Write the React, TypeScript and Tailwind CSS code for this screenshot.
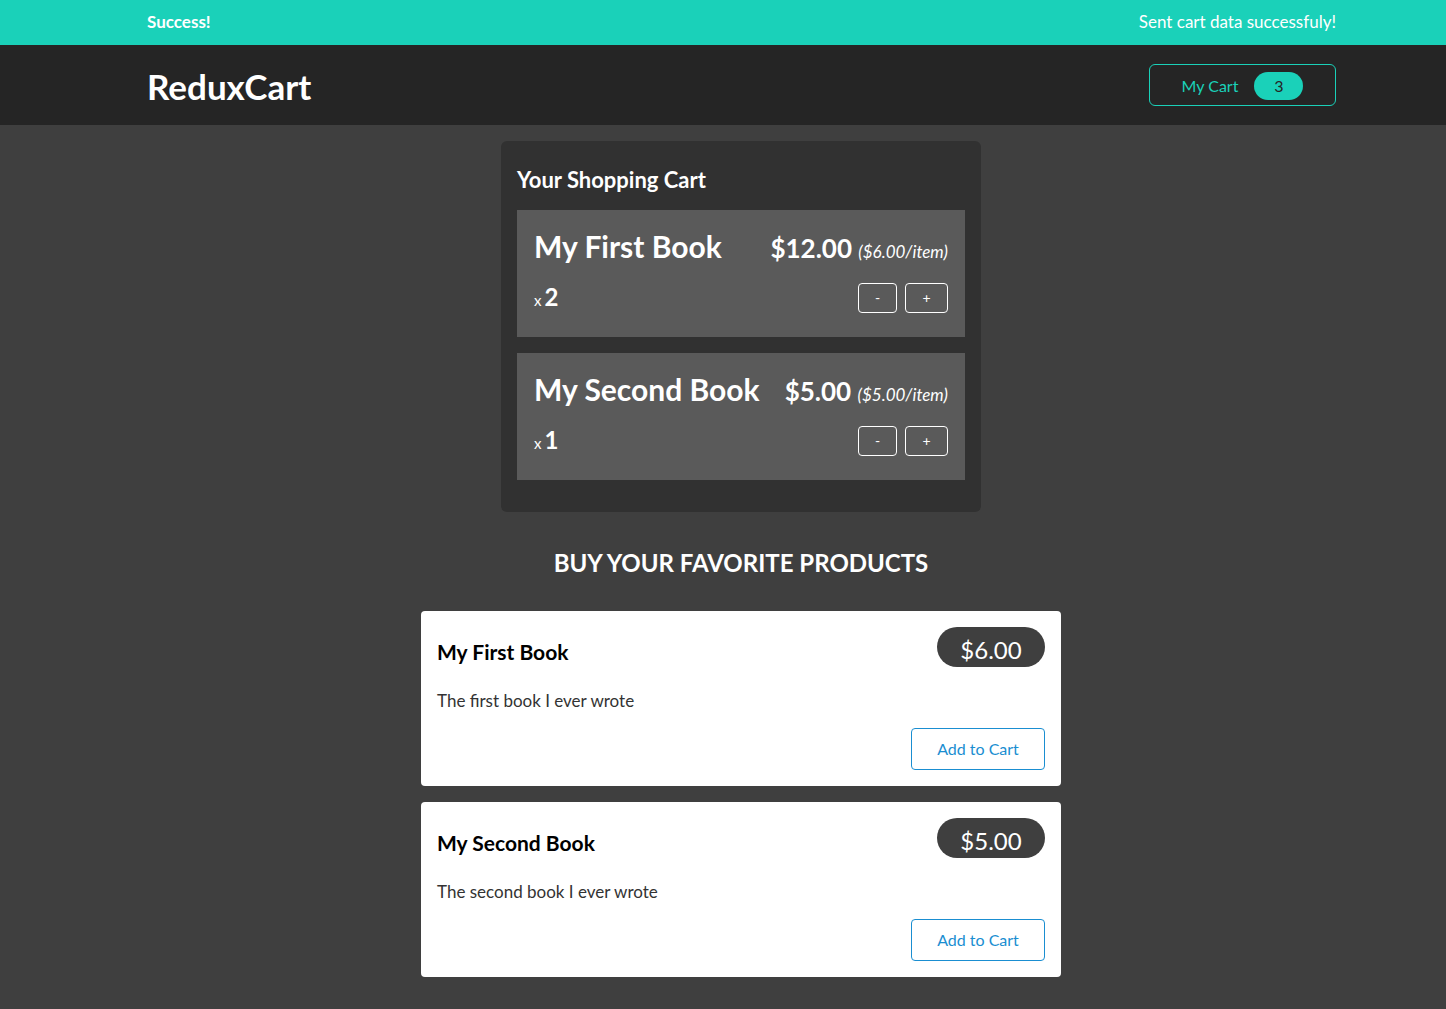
import React from 'react';

const CART_ITEMS = [
  { title: 'My First Book', total: '$12.00', price: '$6.00', quantity: 2 },
  { title: 'My Second Book', total: '$5.00', price: '$5.00', quantity: 1 },
];

const PRODUCTS = [
  { title: 'My First Book', price: '$6.00', description: 'The first book I ever wrote' },
  { title: 'My Second Book', price: '$5.00', description: 'The second book I ever wrote' },
];

const CartItem: React.FC<(typeof CART_ITEMS)[number]> = ({ title, total, price, quantity }) => (
  <li className="bg-[#5a5a5a] px-[17px] pt-[16px] pb-[24px] text-white">
    <header className="flex items-baseline justify-between">
      <h3 className="text-[30px] font-bold leading-[40px]">{title}</h3>
      <div className="text-[26px] font-bold">
        {total}{' '}
        <span className="text-[17px] font-normal italic">({price}/item)</span>
      </div>
    </header>
    <div className="mt-[15px] flex items-center justify-between">
      <div className="flex items-baseline">
        <span className="text-[15px]">x</span>
        <span className="ml-[3px] text-[24px] font-bold leading-none">{quantity}</span>
      </div>
      <div className="flex gap-2">
        <button className="h-[30px] w-[39px] rounded-[4px] border border-white text-[14px] leading-none text-white">
          -
        </button>
        <button className="h-[30px] w-[43px] rounded-[4px] border border-white text-[14px] leading-none text-white">
          +
        </button>
      </div>
    </div>
  </li>
);

const ProductItem: React.FC<(typeof PRODUCTS)[number]> = ({ title, price, description }) => (
  <li className="rounded-[4px] bg-white p-4">
    <header className="flex items-start justify-between">
      <h3 className="mt-[8px] text-[21px] font-bold leading-[33px] text-black">{title}</h3>
      <div className="flex h-[40px] w-[108px] items-center justify-center rounded-full bg-[#3f3f3f] pt-[5px] text-[24px] text-white">
        {price}
      </div>
    </header>
    <p className="mt-[20px] text-[17px] leading-[25px] text-[#333]">{description}</p>
    <div className="mt-[15px] flex justify-end">
      <button className="h-[42px] w-[134px] rounded-[4px] border border-[#1a8ed1] text-[16px] text-[#1a8ed1]">
        Add to Cart
      </button>
    </div>
  </li>
);

export default function App() {
  return (
    <div className="min-h-screen bg-[#3f3f3f] font-['Lato',sans-serif]">
      {/* Notification */}
      <section className="flex h-[45px] items-center justify-between bg-[#1ad1b9] pl-[147px] pr-[110px] pb-[2px] text-white">
        <h2 className="text-[17px] font-bold">Success!</h2>
        <p className="text-[17px]">Sent cart data successfuly!</p>
      </section>

      {/* Header */}
      <header className="flex h-[80px] items-center justify-between bg-[#252525] pl-[147px] pr-[110px]">
        <h1 className="pt-[3px] text-[35px] font-bold text-white">ReduxCart</h1>
        <button className="flex h-[42px] w-[187px] items-center justify-center gap-4 rounded-[6px] border border-[#1ad1b9] pt-[1px] text-[16px] text-[#1ad1b9]">
          <span>My Cart</span>
          <span className="flex h-[28px] w-[49px] items-center justify-center rounded-full bg-[#1ad1b9] text-[#252525]">
            3
          </span>
        </button>
      </header>

      <main className="flex flex-col items-center pt-4 pb-8 pl-[36px]">
        {/* Cart */}
        <section className="w-[480px] rounded-[6px] bg-[#313131] px-4 pt-[22px] pb-8">
          <h2 className="mb-[14px] text-[22px] font-bold text-white">Your Shopping Cart</h2>
          <ul className="flex flex-col gap-4">
            {CART_ITEMS.map((item) => (
              <CartItem key={item.title} {...item} />
            ))}
          </ul>
        </section>

        {/* Products */}
        <section className="mt-[33px] w-[640px]">
          <h2 className="mb-[30px] text-center text-[24px] font-bold uppercase text-white">
            Buy your favorite products
          </h2>
          <ul className="flex flex-col gap-4">
            {PRODUCTS.map((product) => (
              <ProductItem key={product.title} {...product} />
            ))}
          </ul>
        </section>
      </main>
    </div>
  );
}
